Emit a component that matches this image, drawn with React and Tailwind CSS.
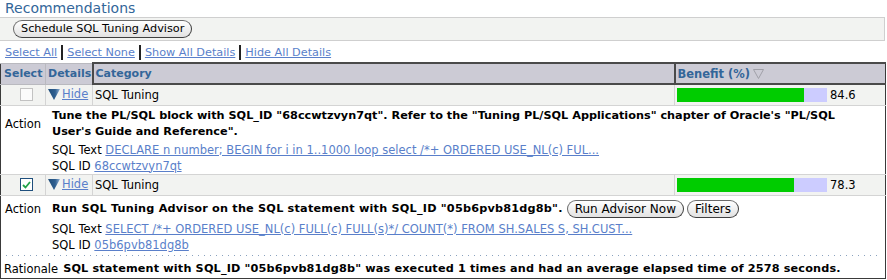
import React from 'react';

const link = 'text-[#5a7fca] underline underline-offset-[1px]';

function Pill({ children, className = 'text-[12px]' }) {
  return (
    <button className={`h-[18px] px-[7px] rounded-[9px] border border-[#6b6b6b] border-b-[#3f3f3f] border-r-[#3f3f3f] bg-gradient-to-b from-white to-[#e2e2e2] text-black leading-none whitespace-nowrap font-normal tracking-normal ${className}`}>
      {children}
    </button>
  );
}

function Check({ on }) {
  if (!on) return <span className="block w-[13px] h-[13px] border border-[#c2c2c2] bg-[#fbfbfb]" />;
  return (
    <span className="flex items-center justify-center w-[13px] h-[13px] border border-[#1f4f7d] bg-white">
      <svg width="9" height="8" viewBox="0 0 9 8">
        <path d="M1 4 L3.5 6.5 L8 1" fill="none" stroke="#22a34a" strokeWidth="1.8" />
      </svg>
    </span>
  );
}

function HideToggle() {
  return (
    <span className="inline-flex items-center gap-[2px]">
      <svg width="12" height="12" viewBox="0 0 12 12">
        <defs>
          <linearGradient id="tri" x1="0" x2="1" y1="0" y2="0">
            <stop offset="0" stopColor="#1f4d7a" />
            <stop offset="0.6" stopColor="#2f5f90" />
            <stop offset="1" stopColor="#8fb0d3" />
          </linearGradient>
        </defs>
        <polygon points="0,1 12,1 6,12" fill="url(#tri)" />
      </svg>
      <span className={link}>Hide</span>
    </span>
  );
}

function Bar({ value }) {
  return (
    <div className="flex items-center gap-[3px]">
      <div className="w-[150px] h-[14px] bg-[#ccccff]">
        <div className="h-full bg-[#00cc00]" style={{ width: `${value}%` }} />
      </div>
      <span>{value}</span>
    </div>
  );
}

function RecRow({ on, value }) {
  return (
    <tr className="h-[21px] bg-[#f2f3f1] border-b border-[#d4d4d4]">
      <td className="pl-[19px] border-r border-[#d4d4d4] align-middle"><Check on={on} /></td>
      <td className="pl-[2px] border-r border-[#d4d4d4]"><HideToggle /></td>
      <td className="pl-[2px] border-r border-[#d4d4d4]">SQL Tuning</td>
      <td className="pl-[2px]"><Bar value={value} /></td>
    </tr>
  );
}

export default function App() {
  return (
    <div className="w-[887px] h-[280px] bg-white text-black text-[11.5px] leading-[16px] font-['DejaVu_Sans',sans-serif] overflow-hidden">
      <div className="pl-[5px] h-[17px] text-[14px] leading-[17px] text-[#336699]">Recommendations</div>
      <div className="w-[885px] h-[24px] border-t border-b border-r border-[#cfcfcf] bg-[#f2f3f1] flex items-center pl-[13px]">
        <Pill className="text-[11.25px]">Schedule SQL Tuning Advisor</Pill>
      </div>
      <div className="h-[21px] flex items-center pl-[5px] pt-[2px] text-[11.25px]">
        <span className={link}>Select All</span>
        <span className="inline-block w-[2px] h-[15px] bg-[#222] mx-[4px]" />
        <span className={link}>Select None</span>
        <span className="inline-block w-[2px] h-[15px] bg-[#222] mx-[4px]" />
        <span className={link}>Show All Details</span>
        <span className="inline-block w-[2px] h-[15px] bg-[#222] mx-[4px]" />
        <span className={link}>Hide All Details</span>
      </div>
      <table className="w-[886px] table-fixed border-collapse border-l border-r border-b border-[#3a3a3a]">
        <colgroup>
          <col className="w-[45px]" />
          <col className="w-[47px]" />
          <col />
          <col className="w-[211px]" />
        </colgroup>
        <thead>
          <tr className="h-[21px] bg-[#cccbd5] text-[#336699] text-[11px] text-left">
            <th className="pl-[3px] border-t border-b border-r border-[#b9b9bf] font-bold">Select</th>
            <th className="pl-[2px] border-t border-b border-[#b9b9bf] font-bold">Details</th>
            <th className="pl-[2px] border-t-2 border-l-2 border-b-2 border-[#4a4a4a] font-bold">Category</th>
            <th className="pl-[2px] border-t-2 border-l-2 border-b-2 border-[#4a4a4a] font-bold text-[11.5px]">
              <span className="inline-flex items-center gap-[3px]">
                Benefit (%)
                <svg width="11" height="10" viewBox="0 0 11 10">
                  <polygon points="0.5,0.5 10.5,0.5 5.5,9.5" fill="none" stroke="#a0a0a8" />
                </svg>
              </span>
            </th>
          </tr>
        </thead>
        <tbody>
          <RecRow on={false} value={84.6} />
          <tr className="border-b border-[#d4d4d4]">
            <td colSpan={4} className="p-0">
              <div className="grid grid-cols-[51px_1fr] pt-[2px]">
                <div className="pl-[4px] self-center">Action</div>
                <div className="font-bold text-[11.25px] whitespace-nowrap">
                  Tune the PL/SQL block with SQL_ID "68ccwtzvyn7qt". Refer to the "Tuning PL/SQL Applications" chapter of Oracle's "PL/SQL
                  <br />
                  User's Guide and Reference".
                </div>
                <div />
                <div className="pt-[2px] whitespace-nowrap">
                  SQL Text <span className={link}>DECLARE n number; BEGIN for i in 1..1000 loop select /*+ ORDERED USE_NL(c) FUL...</span>
                </div>
                <div />
                <div className="whitespace-nowrap">
                  SQL ID <span className={link}>68ccwtzvyn7qt</span>
                </div>
              </div>
            </td>
          </tr>
          <RecRow on value={78.3} />
          <tr>
            <td colSpan={4} className="p-0">
              <div className="grid grid-cols-[51px_1fr] pt-[3px]">
                <div className="pl-[4px] self-center">Action</div>
                <div className="font-bold text-[11.25px] tracking-[0.2px] whitespace-nowrap flex items-center gap-[4px] h-[20px]">
                  <span>Run SQL Tuning Advisor on the SQL statement with SQL_ID "05b6pvb81dg8b".</span>
                  <span className="flex gap-[3px]">
                    <Pill>Run Advisor Now</Pill>
                    <Pill>Filters</Pill>
                  </span>
                </div>
                <div />
                <div className="pt-[2px] whitespace-nowrap">
                  SQL Text <span className={link}>SELECT /*+ ORDERED USE_NL(c) FULL(c) FULL(s)*/ COUNT(*) FROM SH.SALES S, SH.CUST...</span>
                </div>
                <div />
                <div className="whitespace-nowrap">
                  SQL ID <span className={link}>05b6pvb81dg8b</span>
                </div>
              </div>
              <div className="mx-[5px] mt-[2px] h-px bg-[linear-gradient(to_right,#8aa2bf_1px,transparent_1px)] bg-[length:6px_1px]" />
              <div className="flex gap-[5px] pl-[3px] pt-[5px] pb-[1px] whitespace-nowrap">
                <span>Rationale</span>
                <span className="font-bold text-[11.25px] tracking-[0.15px]">SQL statement with SQL_ID "05b6pvb81dg8b" was executed 1 times and had an average elapsed time of 2578 seconds.</span>
              </div>
            </td>
          </tr>
        </tbody>
      </table>
    </div>
  );
}
